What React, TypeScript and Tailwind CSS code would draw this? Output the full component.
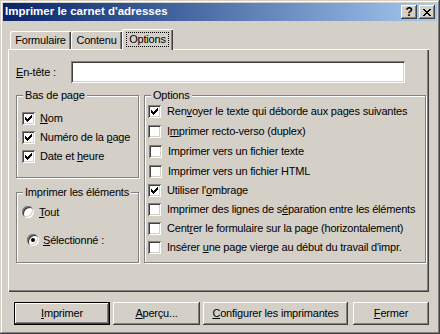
import React from 'react'

const raised =
  'shadow-[inset_-1px_-1px_0_#404040,inset_1px_1px_0_#fff,inset_-2px_-2px_0_#808080,inset_2px_2px_0_#d4d0c8]'
const sunken =
  'shadow-[inset_1px_1px_0_#808080,inset_-1px_-1px_0_#fff,inset_2px_2px_0_#404040,inset_-2px_-2px_0_#d4d0c8]'

function CheckBox({ checked }: { checked: boolean }) {
  return (
    <span className={`relative block h-[13px] w-[13px] shrink-0 bg-white ${sunken}`}>
      {checked && (
        <svg className="absolute inset-0" width="13" height="13" viewBox="0 0 13 13" shapeRendering="crispEdges">
          <path
            fill="#000"
            d="M9 3h1v1h-1z M8 4h2v1h-2z M3 5h1v1h-1z M7 5h3v1h-3z M3 6h2v1h-2z M6 6h3v1h-3z M3 7h5v1h-5z M4 8h3v1h-3z M5 9h1v1h-1z"
          />
        </svg>
      )}
    </span>
  )
}

function Radio({ checked }: { checked: boolean }) {
  return (
    <span
      className={`relative flex h-[12px] w-[12px] shrink-0 items-center justify-center rounded-full bg-white shadow-[inset_1px_1px_0_#808080,inset_-1px_-1px_0_#fff,inset_2px_2px_0_#404040,inset_-2px_-2px_0_#d4d0c8]`}
    >
      {checked && <span className="h-[4px] w-[4px] rounded-full bg-black" />}
    </span>
  )
}

function Group({
  title,
  className,
  children,
}: {
  title: string
  className: string
  children: React.ReactNode
}) {
  return (
    <div
      className={`relative border border-[#808080] shadow-[inset_1px_1px_0_#fff,1px_1px_0_#fff] ${className}`}
    >
      {/* legend sits over the etched top line */}
      <span className="absolute top-[-7px] left-[6px] bg-[#d4d0c8] px-[2px] leading-[13px]">{title}</span>
      {children}
    </div>
  )
}

const footerItems = [
  { label: <><u>N</u>om</> },
  { label: <>Numéro de la <u>p</u>age</> },
  { label: <>Date et <u>h</u>eure</> },
]

const options = [
  { label: <>Ren<u>v</u>oyer le texte qui déborde aux pages suivantes</>, checked: true },
  { label: <>I<u>m</u>primer recto-verso (duplex)</>, checked: false },
  { label: <>Imprimer vers un fichier texte</>, checked: false, indent: true },
  { label: <>Imprimer vers un fichier HTML</>, checked: false, indent: true },
  { label: <>Utiliser l'<u>o</u>mbrage</>, checked: true },
  { label: <>Imprimer des lignes de s<u>é</u>paration entre les éléments</>, checked: false },
  { label: <>Cent<u>r</u>er le formulaire sur la page (horizontalement)</>, checked: false },
  { label: <>Insérer <u>u</u>ne page vierge au début du travail d'impr.</>, checked: false },
]

export default function App() {
  return (
    <div
      className={`flex h-[334px] w-[440px] flex-col bg-[#d4d0c8] p-[3px] font-['Liberation_Sans',Arial,sans-serif] text-[11px] tracking-[-0.2px] text-black [&_u]:underline-offset-[1px] shadow-[inset_-1px_-1px_0_#404040,inset_1px_1px_0_#d4d0c8,inset_-2px_-2px_0_#808080,inset_2px_2px_0_#fff]`}
    >
      {/* Title bar */}
      <div className="flex h-[18px] items-center bg-linear-to-r from-[#0a246a] to-[#a6caf0] pr-[2px] pl-[2px]">
        <span className="flex-1 text-[11.5px] font-bold tracking-normal text-white">Imprimer le carnet d'adresses</span>
        <div className="flex gap-[2px]">
          <button className={`flex h-[14px] w-[16px] items-center justify-center bg-[#d4d0c8] text-[12px] leading-none font-bold ${raised}`}>
            ?
          </button>
          <button className={`flex h-[14px] w-[16px] items-center justify-center bg-[#d4d0c8] ${raised}`}>
            <svg width="8" height="7" viewBox="0 0 8 7" shapeRendering="crispEdges">
              <path
                fill="#000"
                d="M0 0h2v1h-2z M6 0h2v1h-2z M1 1h2v1h-2z M5 1h2v1h-2z M2 2h4v1h-4z M3 3h2v1h-2z M2 4h4v1h-4z M1 5h2v1h-2z M5 5h2v1h-2z M0 6h2v1h-2z M6 6h2v1h-2z"
              />
            </svg>
          </button>
        </div>
      </div>

      {/* Tabs + panel */}
      <div className="mt-[8px] ml-[5px] w-[421px]">
        <div className="flex h-[20px] items-end pl-[2px]">
          <div className="flex h-[18px] w-[61px] items-center justify-center rounded-tl-[2px] shadow-[inset_1px_1px_0_#fff,inset_-1px_0_0_#404040,inset_-2px_0_0_#808080]">
            Formulaire
          </div>
          <div className="flex h-[18px] w-[51px] items-center justify-center rounded-tl-[2px] shadow-[inset_1px_1px_0_#fff,inset_-1px_0_0_#404040,inset_-2px_0_0_#808080]">
            Contenu
          </div>
          <div className="relative z-10 -mb-px flex h-[21px] w-[51px] items-start justify-center rounded-tl-[2px] bg-[#d4d0c8] pt-[3px] shadow-[inset_1px_1px_0_#fff,inset_-1px_0_0_#404040,inset_-2px_0_0_#808080]">
            <span className="border border-dotted border-black px-[2px] leading-[13px]">Options</span>
          </div>
        </div>

        <div className="h-[243px] pt-[12px] pl-[8px] shadow-[inset_1px_1px_0_#fff,inset_-1px_-1px_0_#404040,inset_-2px_-2px_0_#808080]">
          <div className="flex h-[22px] items-center">
            <label className="w-[55px]">
              <u>E</u>n-tête :
            </label>
            <div className={`h-[22px] w-[334px] bg-white ${sunken}`} />
          </div>

          <div className="mt-[12px] flex gap-[5px]">
            <div className="flex flex-col gap-[14px]">
              <Group title="Bas de page" className="h-[83px] w-[123px] pt-[13px] pl-[5px]">
                {footerItems.map((item, i) => (
                  <div key={i} className="flex h-[19px] items-center gap-[5px]">
                    <CheckBox checked />
                    <span>{item.label}</span>
                  </div>
                ))}
              </Group>
              <Group title="Imprimer les éléments" className="h-[71px] w-[123px] pt-[9px] pl-[5px]">
                <div className="flex h-[20px] items-center gap-[5px]">
                  <Radio checked={false} />
                  <span>
                    <u>T</u>out
                  </span>
                </div>
                <div className="mt-[8px] flex h-[20px] items-center gap-[4px] pl-[5px]">
                  <Radio checked />
                  <span>
                    <u>S</u>électionné :
                  </span>
                </div>
              </Group>
            </div>

            <Group title="Options" className="h-[168px] w-[282px] pt-[5px] pl-[3px]">
              {options.map((opt, i) => (
                <div
                  key={i}
                  className={`flex items-center gap-[6px] ${i < 4 ? 'h-5' : 'h-[19px]'} ${opt.indent ? 'pl-px' : ''}`}
                >
                  <CheckBox checked={opt.checked} />
                  <span className="whitespace-nowrap">{opt.label}</span>
                </div>
              ))}
            </Group>
          </div>
        </div>
      </div>

      {/* Buttons */}
      <div className="mt-[10px] ml-[11px] flex">
        <button className="h-[23px] w-[96px] border border-black">
          <span className={`flex h-full w-full items-center justify-center ${raised}`}>
            <span>
              <u>I</u>mprimer
            </span>
          </span>
        </button>
        <button className={`ml-[3px] flex h-[23px] w-[87px] items-center justify-center ${raised}`}>
          <span>
            <u>A</u>perçu...
          </span>
        </button>
        <button className={`ml-[3px] flex h-[23px] w-[145px] items-center justify-center ${raised}`}>
          <span>
            <u>C</u>onfigurer les imprimantes
          </span>
        </button>
        <button className={`ml-[5px] flex h-[23px] w-[76px] items-center justify-center ${raised}`}>
          <span>
            <u>F</u>ermer
          </span>
        </button>
      </div>
    </div>
  )
}
